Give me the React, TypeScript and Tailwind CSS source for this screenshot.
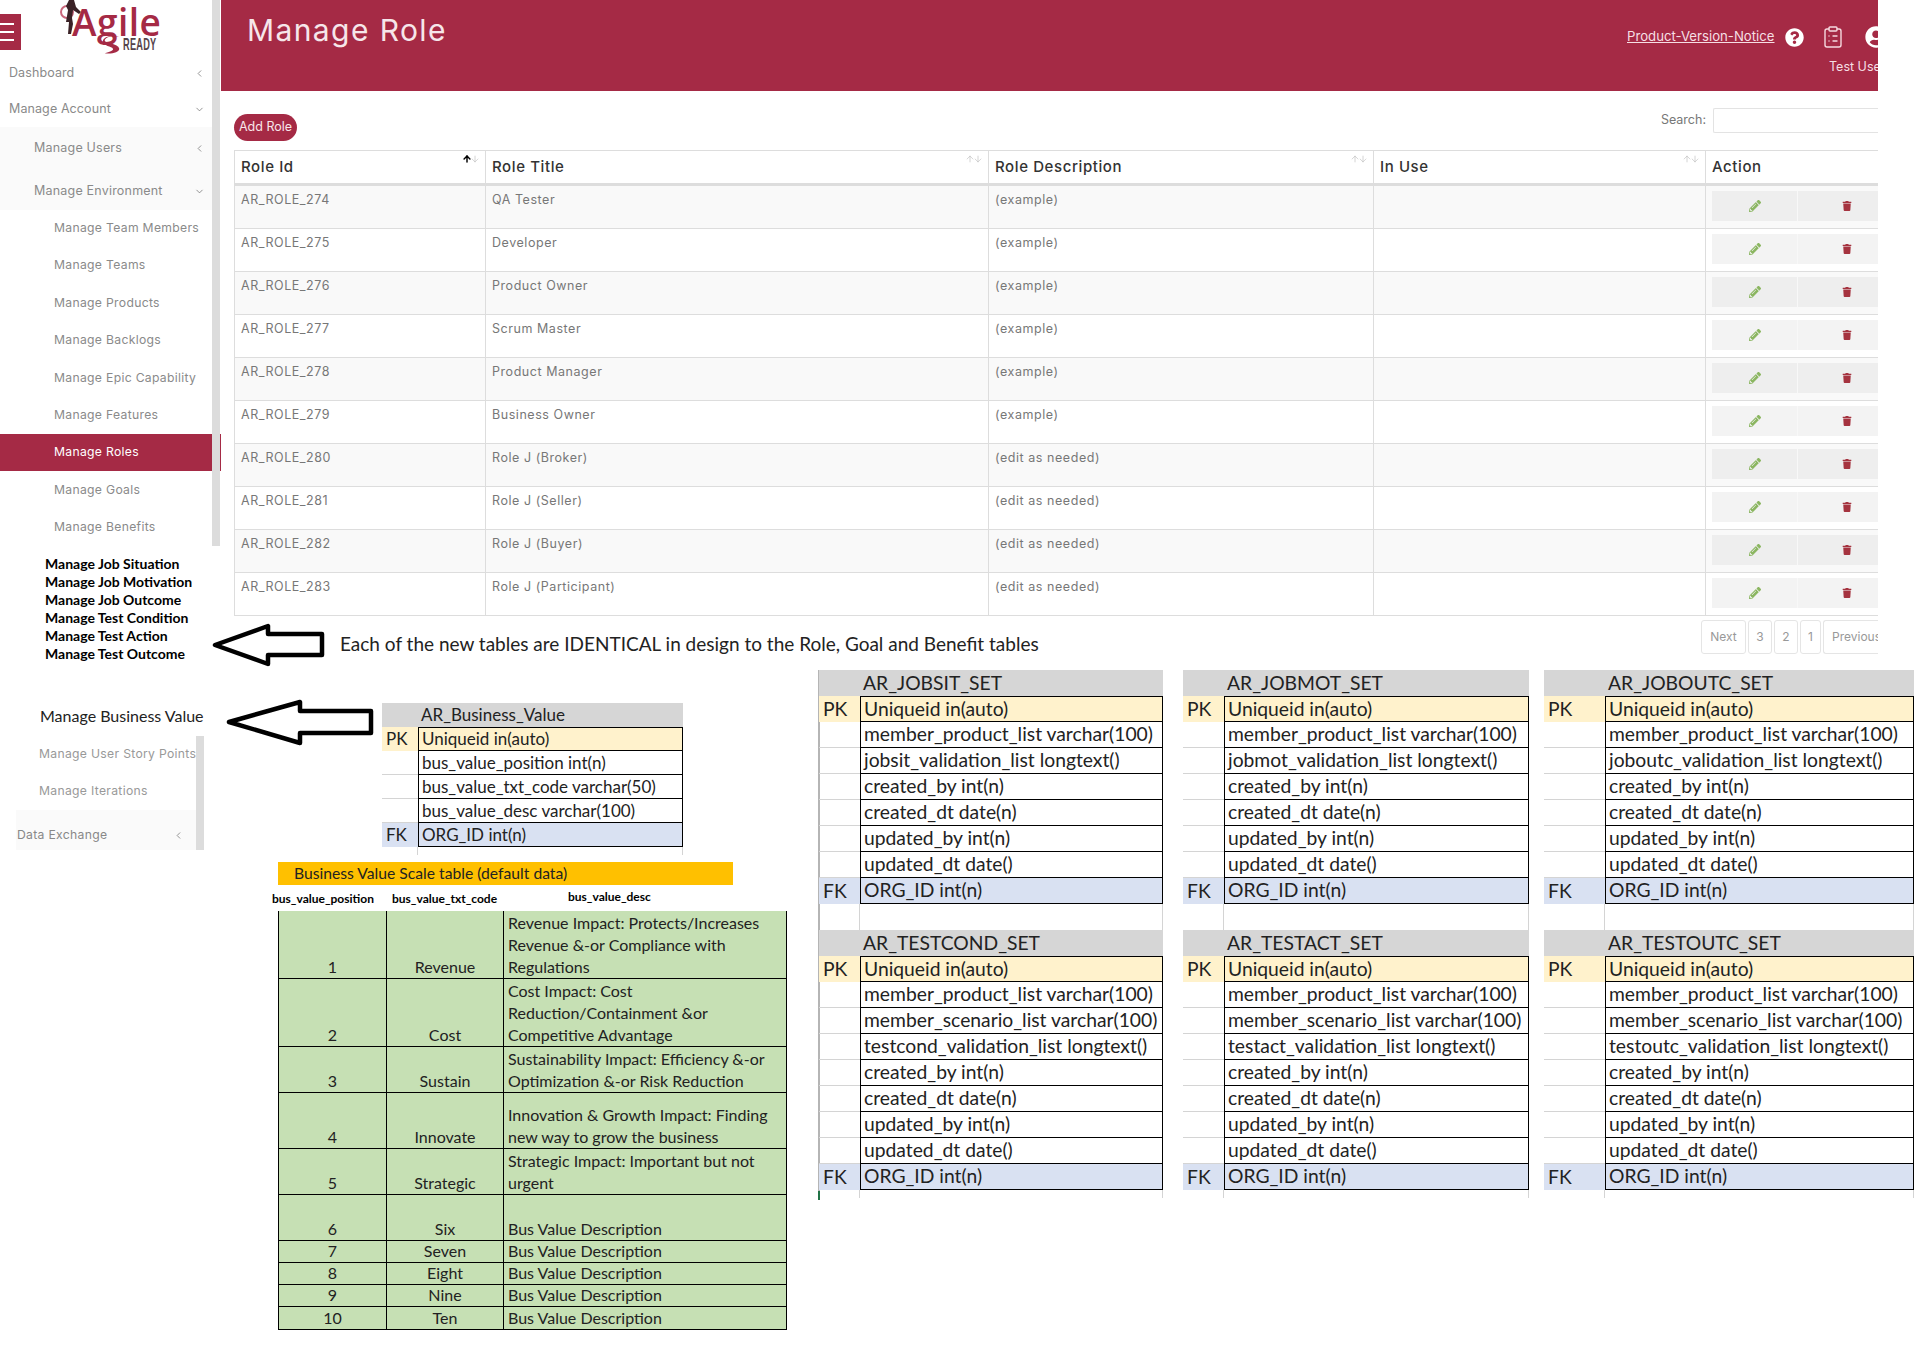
import { ArrowDown, ArrowUp, ChevronDown, ChevronLeft, ClipboardList } from "lucide-react";
import { FaPencilAlt, FaQuestionCircle, FaTrash, FaUserCircle } from "react-icons/fa";

type NavItem = { label: string; open?: boolean; closed?: boolean };

const subItems = [
  "Manage Team Members",
  "Manage Teams",
  "Manage Products",
  "Manage Backlogs",
  "Manage Epic Capability",
  "Manage Features",
  "Manage Roles",
  "Manage Goals",
  "Manage Benefits",
];

const roles = [
  ["AR_ROLE_274", "QA Tester", "(example)"],
  ["AR_ROLE_275", "Developer", "(example)"],
  ["AR_ROLE_276", "Product Owner", "(example)"],
  ["AR_ROLE_277", "Scrum Master", "(example)"],
  ["AR_ROLE_278", "Product Manager", "(example)"],
  ["AR_ROLE_279", "Business Owner", "(example)"],
  ["AR_ROLE_280", "Role J (Broker)", "(edit as needed)"],
  ["AR_ROLE_281", "Role J (Seller)", "(edit as needed)"],
  ["AR_ROLE_282", "Role J (Buyer)", "(edit as needed)"],
  ["AR_ROLE_283", "Role J (Participant)", "(edit as needed)"],
];

const columns = [
  { label: "Role Id", width: "w-[251px]", active: true },
  { label: "Role Title", width: "w-[503px]" },
  { label: "Role Description", width: "w-[385px]" },
  { label: "In Use", width: "w-[332px]" },
];

const jobRows = (prefix: string) => [
  "member_product_list varchar(100)",
  `${prefix}_validation_list longtext()`,
  "created_by int(n)",
  "created_dt date(n)",
  "updated_by int(n)",
  "updated_dt date()",
];

const testRows = (prefix: string) => [
  "member_product_list varchar(100)",
  "member_scenario_list varchar(100)",
  `${prefix}_validation_list longtext()`,
  "created_by int(n)",
  "created_dt date(n)",
  "updated_by int(n)",
  "updated_dt date()",
];

const scaleRows = [
  { pos: "1", code: "Revenue", desc: "Revenue Impact: Protects/Increases Revenue &-or Compliance with Regulations", height: "h-[68px]" },
  { pos: "2", code: "Cost", desc: "Cost Impact: Cost Reduction/Containment &or Competitive Advantage", height: "h-[68px]" },
  { pos: "3", code: "Sustain", desc: "Sustainability Impact: Efficiency &-or Optimization &-or Risk Reduction", height: "h-[46px]" },
  { pos: "4", code: "Innovate", desc: "Innovation & Growth Impact: Finding new way to grow the business", height: "h-[56px]" },
  { pos: "5", code: "Strategic", desc: "Strategic Impact: Important but not urgent", height: "h-[46px]" },
  { pos: "6", code: "Six", desc: "Bus Value Description", height: "h-[46px]" },
  { pos: "7", code: "Seven", desc: "Bus Value Description", height: "h-[22px]" },
  { pos: "8", code: "Eight", desc: "Bus Value Description", height: "h-[22px]" },
  { pos: "9", code: "Nine", desc: "Bus Value Description", height: "h-[22px]" },
  { pos: "10", code: "Ten", desc: "Bus Value Description", height: "h-[22px]" },
];

function SideRow({ label, open, closed }: NavItem) {
  return (
    <div className="flex h-full items-center justify-between pr-[7px]">
      <span>{label}</span>
      {open && <ChevronDown size={11} strokeWidth={1.5} className="text-[#666]" />}
      {closed && <ChevronLeft size={11} strokeWidth={1.5} className="text-[#666]" />}
    </div>
  );
}

function Logo() {
  return (
    <div className="relative h-[55px] w-[212px]">
      <div className="absolute left-0 top-[14px] flex h-[36px] w-[21px] flex-col justify-center gap-[6px] bg-[#a52a45] pr-[7px]">
        <div className="h-[2px] bg-white" />
        <div className="h-[2px] bg-white" />
        <div className="h-[2px] bg-white" />
      </div>
      <svg className="absolute left-[60px] top-0" width="24" height="36" viewBox="0 0 24 36">
        <circle cx="7" cy="12" r="6" fill="none" stroke="#c9667b" strokeWidth="2" />
        <path d="M9 0h5l2 7 5 5-2 2-6-4-1 8 1 6-2 10H8l1-12-3 0 2-12-2-4z" fill="#3a2226" />
      </svg>
      <span className="absolute left-[72px] top-[6px] font-['Open_Sans',sans-serif] text-[37px] font-semibold leading-[32px] tracking-[0.5px] text-[#a52a45]">
        Agile
      </span>
      <svg className="absolute left-[101px] top-[35px]" width="22" height="20" viewBox="0 0 22 22">
        <path d="M19 2C10 0 3 3 3 6s15 3 16 9c0 4-8 6-16 5 6-2 10-3 9-5S1 12 1 7s10-8 18-5z" fill="#a52a45" />
      </svg>
      <span className="absolute left-[123px] top-[38px] origin-left scale-x-[0.54] font-['Liberation_Sans',sans-serif] text-[17px] font-bold leading-[14px] tracking-[0.5px] text-[#55444a]">
        READY
      </span>
    </div>
  );
}

function Sidebar() {
  return (
    <aside className="flex h-[546px] w-[221px] shrink-0">
      <div className="w-[212px] text-[12.5px] tracking-[0.1px] text-[#8a8a8a]">
        <Logo />
        <div className="h-[36px] pl-[9px]"><SideRow label="Dashboard" closed /></div>
        <div className="h-[36px] pl-[9px]"><SideRow label="Manage Account" open /></div>
        <div className="bg-[#fafafa] pl-[34px] tracking-[0.2px]">
          <div className="h-[42px]"><SideRow label="Manage Users" closed /></div>
          <div className="h-[41px] pt-[3px]"><SideRow label="Manage Environment" open /></div>
        </div>
        <div className="-mt-[0.5px]">
          {subItems.map((item) => (
            <div
              key={item}
              className={
                item === "Manage Roles"
                  ? "flex h-[37.4px] w-[221px] items-center bg-[#a52a45] pl-[54px] text-[12.2px] tracking-[0.3px] text-white"
                  : "flex h-[37.4px] items-center pl-[54px] text-[12.2px] tracking-[0.3px]"
              }
            >
              {item}
            </div>
          ))}
        </div>
      </div>
      <div className="w-[8px] bg-[#dcdcdc]" />
    </aside>
  );
}

function RoleTable() {
  return (
    <div className="w-[1700px] text-[#777]">
      <div className="flex h-[36px] border-t border-[#ddd] border-b-[3px] border-b-[#ddd] text-[15px] font-medium tracking-[0.6px] text-[#333]">
        {columns.map((col) => (
          <div key={col.label} className={`${col.width} relative flex items-center border-l border-[#ddd] pl-[6px]`}>
            {col.label}
            <div className="absolute right-[5px] top-[3px] flex">
              <ArrowUp size={10} strokeWidth={col.active ? 3.5 : 1.5} className={col.active ? "-mr-[2px] text-black" : "-mr-[2px] text-[#bbb]"} />
              <ArrowDown size={10} strokeWidth={1.5} className="text-[#bbb]" />
            </div>
          </div>
        ))}
        <div className="flex flex-1 items-center border-l border-[#ddd] pl-[6px]">Action</div>
      </div>
      {roles.map((role, i) => (
        <div key={role[0]} className={`flex h-[43px] border-b border-[#ddd] text-[12.5px] tracking-[0.55px] ${i % 2 === 0 ? "bg-[#f9f9f9]" : "bg-white"}`}>
          {role.map((cell, j) => (
            <div key={j} className={`${columns[j].width} border-l border-[#ddd] pl-[6px] pt-[5px]`}>
              {cell}
            </div>
          ))}
          <div className="w-[332px] border-l border-[#ddd]" />
          <div className="flex-1 border-l border-[#ddd] px-[6px] pt-[5px]">
            <div className={`flex h-[30px] w-[184px] ${i % 2 === 0 ? "bg-[#eeeeee]" : "bg-[#f3f3f3]"}`}>
              <div className="flex w-[86px] items-center justify-center border-r border-[#f8f8f8]">
                <FaPencilAlt size={12} className="text-[#8bb661]" />
              </div>
              <div className="flex flex-1 items-center justify-center">
                <FaTrash size={10} className="text-[#a5333f]" />
              </div>
            </div>
          </div>
        </div>
      ))}
    </div>
  );
}

function Pager() {
  return (
    <div className="mt-[4px] flex justify-end gap-[2px] text-[12px] text-[#999]">
      {[
        ["Next", "w-[45px]"],
        ["3", "w-[24px]"],
        ["2", "w-[24px]"],
        ["1", "w-[21px]"],
      ].map(([label, w]) => (
        <div key={label} className={`${w} flex h-[34px] items-center justify-center rounded-[3px] border border-[#e5e5e5]`}>
          {label}
        </div>
      ))}
      <div className="flex h-[34px] w-[55px] items-center overflow-hidden whitespace-nowrap rounded-l-[3px] border border-r-0 border-[#e5e5e5] pl-[8px]">
        Previous
      </div>
    </div>
  );
}

function Main() {
  return (
    <main className="w-[1657px] shrink-0 overflow-hidden">
      <header className="relative flex h-[91px] bg-[#a52a45] pl-[26px] pt-[10px] text-white">
        <h1 className="text-[30px] font-normal leading-[40px] tracking-[1.4px] text-[#f6e6ea]">Manage Role</h1>
        <div className="absolute left-[1406px] top-[25px] flex w-[251px] items-center overflow-hidden text-[13.2px] text-[#f6dfe4]">
          <span className="shrink-0 whitespace-nowrap underline">Product-Version-Notice</span>
          <FaQuestionCircle size={19} className="ml-[10px] shrink-0 text-white" />
          <ClipboardList size={24} strokeWidth={1.4} className="ml-[17px] shrink-0 text-[#f5d9df]" />
          <FaUserCircle size={22} className="ml-[20px] shrink-0 text-white" />
        </div>
        <div className="absolute left-[1608px] top-[58px] w-[49px] overflow-hidden whitespace-nowrap text-[12.5px] text-[#f6dfe4]">
          Test User
        </div>
      </header>
      <div className="pl-[13px]">
        <div className="flex h-[59px] items-start justify-between pt-[23px]">
          <button className="h-[27px] rounded-full bg-[#a52a45] px-[5px] text-[12.5px] text-[#f8e6ea]">Add Role</button>
          <div className="mt-[-6px] flex items-center text-[12.5px] text-[#777]">
            <span className="mr-[7px]">Search:</span>
            <div className="h-[25px] w-[165px] rounded-l-[2px] border border-r-0 border-[#e3e3e3]" />
          </div>
        </div>
        <RoleTable />
        <Pager />
      </div>
    </main>
  );
}

function Arrow({ left, top, width, height, points }: { left: string; top: string; width: number; height: number; points: string }) {
  return (
    <svg className={`absolute ${left} ${top}`} width={width} height={height} viewBox={`0 0 ${width} ${height}`}>
      <polygon points={points} fill="white" stroke="black" strokeWidth="4.5" strokeLinejoin="round" />
    </svg>
  );
}

function SchemaTable({
  title,
  rows,
  keyCol,
  rowHeight,
  text,
  stub,
}: {
  title: string;
  rows: string[];
  keyCol: string;
  rowHeight: string;
  text: string;
  stub: string;
}) {
  const cell = `flex ${rowHeight} items-center border-x border-b border-black pl-[3px] whitespace-nowrap`;
  const side = `${keyCol} ${rowHeight} flex items-center pl-[4px] shrink-0`;
  return (
    <div className={`${text} font-['Lato','Open_Sans',sans-serif] text-[#222]`}>
      <div className={`flex ${rowHeight} items-center bg-[#d6d6d6]`}>
        <div className={side} />
        <div className="pl-[3px]">{title}</div>
      </div>
      <div className="flex">
        <div className={`${side} bg-[#fff2cc]`}>PK</div>
        <div className={`${cell} flex-1 border-t bg-[#fff2cc]`}>Uniqueid in(auto)</div>
      </div>
      {rows.map((row) => (
        <div key={row} className="flex">
          <div className={`${side} border-b border-[#d4d4d4]`} />
          <div className={`${cell} flex-1`}>{row}</div>
        </div>
      ))}
      <div className="flex">
        <div className={`${side} bg-[#d9e1f2]`}>FK</div>
        <div className={`${cell} flex-1 bg-[#d9e1f2]`}>ORG_ID int(n)</div>
      </div>
      <div className={`flex ${stub}`}>
        <div className={`${keyCol} shrink-0 border-r border-[#d4d4d4]`} />
        <div className="flex-1 border-r border-[#d4d4d4]" />
      </div>
    </div>
  );
}

function ScaleTable() {
  return (
    <div className="absolute left-[278px] top-[862px] w-[509px] font-['Lato','Open_Sans',sans-serif] text-[#222]">
      <div className="flex h-[23px] w-[455px] items-center bg-[#ffc000] pl-[16px] text-[15.7px]">
        Business Value Scale table (default data)
      </div>
      <div className="relative h-[26px] text-[12px] font-bold text-black">
        <span className="absolute left-[-6px] top-[5px] whitespace-nowrap">bus_value_position</span>
        <span className="absolute left-[114px] top-[5px] whitespace-nowrap">bus_value_txt_code</span>
        <span className="absolute left-[290px] top-[3px] whitespace-nowrap">bus_value_desc</span>
      </div>
      <div className="border-x border-b border-black bg-[#c6e0b4] text-[16px] leading-[22px]">
        {scaleRows.map((row, i) => (
          <div key={row.pos} className={`flex ${row.height} items-end ${i < scaleRows.length - 1 ? "border-b border-black" : ""}`}>
            <div className="flex h-full w-[108px] items-end justify-center border-r border-black">{row.pos}</div>
            <div className="flex h-full w-[117px] items-end justify-center border-r border-black">{row.code}</div>
            <div className="flex-1 pl-[4px] pr-[10px]">{row.desc}</div>
          </div>
        ))}
      </div>
    </div>
  );
}

export default function App() {
  return (
    <div className="relative h-[1372px] w-[1928px] overflow-hidden bg-white font-['Inter',sans-serif]">
      <div className="flex">
        <Sidebar />
        <Main />
      </div>

      {/* pasted notes on top of the screenshot */}
      <div className="absolute left-[45px] top-[555px] font-['Lato','Open_Sans',sans-serif] text-[14px] font-bold leading-[18px] text-black">
        <div>Manage Job Situation</div>
        <div>Manage Job Motivation</div>
        <div>Manage Job Outcome</div>
        <div>Manage Test Condition</div>
        <div>Manage Test Action</div>
        <div>Manage Test Outcome</div>
      </div>
      <Arrow left="left-[210px]" top="top-[620px]" width={117} height={50} points="5,25 58,6 58,14 112,14 112,35 58,35 58,44" />
      <div className="absolute left-[340px] top-[630px] font-['Lato','Open_Sans',sans-serif] text-[19px] leading-[28px] text-[#222]">
        Each of the new tables are IDENTICAL in design to the Role, Goal and Benefit tables
      </div>

      <div className="absolute left-[40px] top-[705px] font-['Lato','Open_Sans',sans-serif] text-[16px] leading-[22px] text-[#222]">
        Manage Business Value
      </div>
      <Arrow left="left-[224px]" top="top-[696px]" width={152} height={54} points="5,26 76,6 76,15 147,15 147,37 76,37 76,47" />

      <div className="absolute left-[16px] top-[736px] flex w-[188px] text-[12.2px] tracking-[0.3px] text-[#999]">
        <div className="w-[180px]">
          <div className="flex h-[36px] items-center whitespace-nowrap pl-[23px]">Manage User Story Points</div>
          <div className="flex h-[38px] items-center pl-[23px]">Manage Iterations</div>
          <div className="flex h-[40px] items-center justify-between bg-[#fafafa] pl-[1px] pr-[12px] pt-[10px] text-[#888]">
            Data Exchange
            <ChevronLeft size={11} strokeWidth={1.5} className="text-[#666]" />
          </div>
        </div>
        <div className="w-[8px] bg-[#dcdcdc]" />
      </div>

      <div className="absolute left-[382px] top-[703px] w-[301px]">
        <SchemaTable
          title="AR_Business_Value"
          keyCol="w-[36px]"
          rowHeight="h-[24px]"
          text="text-[17px]"
          stub="h-[8px]"
          rows={["bus_value_position int(n)", "bus_value_txt_code varchar(50)", "bus_value_desc varchar(100)"]}
        />
      </div>

      <ScaleTable />

      <div className="absolute left-[818px] top-[670px] flex h-[530px] w-[2px] flex-col justify-end bg-[#b5b5b5]">
        <div className="h-[9px] bg-[#217346]" />
      </div>
      <div className="absolute left-[819px] top-[670px] grid grid-cols-[364px_361px_370px] grid-rows-[260px_268px]">
        <div className="pr-[20px]">
          <SchemaTable title="AR_JOBSIT_SET" keyCol="w-[41px]" rowHeight="h-[26px]" text="text-[19.3px]" stub="h-[26px]" rows={jobRows("jobsit")} />
        </div>
        <div className="pr-[15px]">
          <SchemaTable title="AR_JOBMOT_SET" keyCol="w-[41px]" rowHeight="h-[26px]" text="text-[19.3px]" stub="h-[26px]" rows={jobRows("jobmot")} />
        </div>
        <SchemaTable title="AR_JOBOUTC_SET" keyCol="w-[61px]" rowHeight="h-[26px]" text="text-[19.3px]" stub="h-[26px]" rows={jobRows("joboutc")} />
        <div className="pr-[20px]">
          <SchemaTable title="AR_TESTCOND_SET" keyCol="w-[41px]" rowHeight="h-[26px]" text="text-[19.3px]" stub="h-[8px]" rows={testRows("testcond")} />
        </div>
        <div className="pr-[15px]">
          <SchemaTable title="AR_TESTACT_SET" keyCol="w-[41px]" rowHeight="h-[26px]" text="text-[19.3px]" stub="h-[8px]" rows={testRows("testact")} />
        </div>
        <SchemaTable title="AR_TESTOUTC_SET" keyCol="w-[61px]" rowHeight="h-[26px]" text="text-[19.3px]" stub="h-[8px]" rows={testRows("testoutc")} />
      </div>
    </div>
  );
}
